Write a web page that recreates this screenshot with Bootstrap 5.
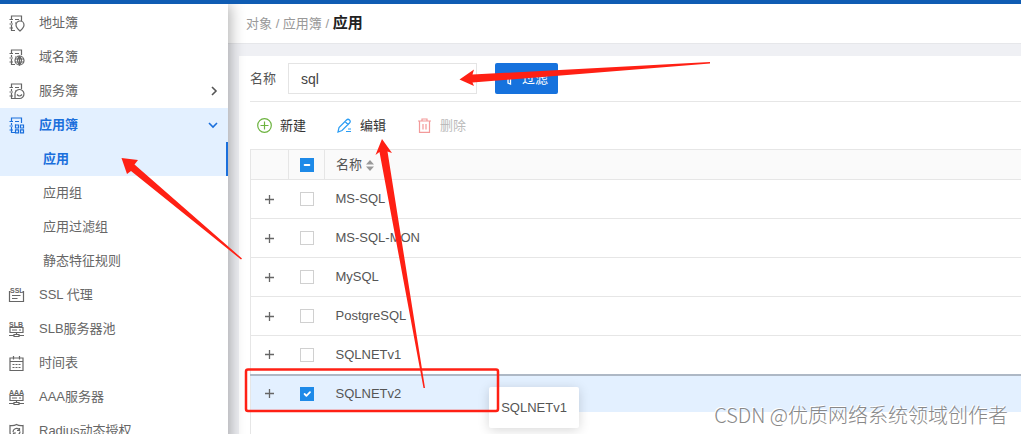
<!DOCTYPE html>
<html lang="zh-CN">
<head>
<meta charset="utf-8">
<meta name="viewport" content="width=device-width, initial-scale=1">
<title>应用</title>
<link href="https://cdn.jsdelivr.net/npm/bootstrap@5.3.0/dist/css/bootstrap.min.css" rel="stylesheet">
<style>
  body { font: 13px/20px "Liberation Sans", "Noto Sans CJK SC", sans-serif; color: #555; background: #fff; }
  .shell { height: 100vh; margin-right: 3px; }
  .topbar { height: 4px; background: #0f5cb3; }
  .side { width: 228px; padding-top: 2px; }
  .side-wrap { box-shadow: 2px 0 14px rgba(0,0,0,.32); z-index: 2; clip-path: inset(0 -24px 0 0); }
  .side a { height: 34px; padding: 0 10px 0 8px; color: #666; text-decoration: none; white-space: nowrap; }
  .side a svg { flex: none; }
  .side .label { margin-left: 14px; }
  .side .sub { padding-left: 43px; }
  .side .on { background: #e3f0ff; color: #1a6fdc; font-weight: 700; }
  .side .here { border-right: 2px solid #1a6fdc; }
  .ico { width: 17px; height: 17px; fill: none; stroke: currentColor; stroke-width: 1.2; overflow: visible; }
  .ico text { font: 700 7px "Liberation Sans", sans-serif; fill: currentColor; stroke: none; }
  .main { background: #eff0f4; }
  .crumbs { height: 40px; padding: 0 18px; color: #999; border-bottom: 1px solid #e6e7ea; }
  .crumbs a { color: #999; text-decoration: none; }
  .crumbs strong { font-size: 15px; color: #222; }
  .panel { margin: 12px 0 0 11px; padding-left: 11px; }
  .filter { height: 46px; border-bottom: 1px solid #e6e6e6; }
  .filter input { width: 189px; height: 31px; margin: 0 18px 0 12px; padding: 0 12px; font-size: 14px; color: #444; border: 1px solid #e4e4e4; border-radius: 0; }
  .filter button { width: 63px; height: 31px; padding: 0 9px; font-size: 13px; line-height: 20px; border: 0; border-radius: 2px; background: #1672dd; color: #fff; }
  .tools { height: 47px; padding-left: 7px; }
  .tools button { width: 80px; padding: 0; font-size: 13px; line-height: 20px; color: #333; border: 0; background: none; text-align: left; }
  .tools button:disabled { color: #bbb; opacity: 1; border: 0; }
  .grid { margin: 0; border-left: 1px solid #e6e6e6; color: #555; table-layout: fixed; }
  .grid > :not(caption) > * > * { padding: 0; height: 39px; border-bottom: 1px solid #e6e6e6; color: #555; font-weight: 400; background: transparent; vertical-align: middle; }
  .grid > thead > tr > th { height: 30px; background: #fafafa; border-top: 1px solid #e6e6e6; }
  .grid > thead > tr > th:not(:last-child) { border-right: 1px solid #e6e6e6; }
  .grid .c1 { width: 38px; } .grid .c2 { width: 36px; }
  .grid > * > tr > :last-child { padding-left: 11px; }
  .grid > tbody > tr:nth-child(5) > td { border-bottom: 2px solid #aeb8c5; }
  .grid > tbody > tr.picked > td { height: 37px; background: #e3f0ff; border-bottom: 0; }
  .grid input.form-check-input { display: block; width: 14px; height: 14px; margin: 0 auto; border: 1px solid #d0d0d0; border-radius: 0; }
  .grid input.form-check-input:checked, .grid input.form-check-input:indeterminate { background-color: #1e8ae8; border-color: #1e8ae8; }
  .plus { display: block; margin: 0 auto; padding: 0; border: 0; background: none; color: #666; }
  .plus svg { display: block; }
  .rest { border-left: 1px solid #e6e6e6; }
  .drag { left: 489px; top: 387px; width: 90px; height: 41px; z-index: 3; background: #fff; border-radius: 2px; box-shadow: 0 2px 12px rgba(0,0,0,.16); }
  .marks { left: 0; top: 0; width: 1024px; height: 434px; z-index: 4; pointer-events: none; }
  .water { right: 16px; bottom: 4px; z-index: 5; font: 300 20px/30px "Noto Sans CJK SC", sans-serif; color: #888; text-shadow: -1px -1px 0 #fff; white-space: nowrap; }
</style>
</head>
<body class="position-relative overflow-hidden">
<svg class="d-none">
  <symbol id="book" viewBox="0 0 17 17"><path d="M3.500 4V1H13.500V6M3.500 6V8M3.500 10V15.500H7M1.500 4.500H5M1.500 9H5M1.500 13H5M7 4.500H11M7 8H8"/></symbol>
  <symbol id="server" viewBox="0 0 17 17"><path d="M2 6.500H15V11.500H2ZM4 9H9M11 9H13M8.500 11.500V14M1 14.500H6M11 14.500H16M6 13.500H11V15.500H6Z"/></symbol>
</svg>
<div class="shell d-flex flex-column overflow-hidden">
  <div class="topbar flex-shrink-0"></div>
  <div class="d-flex flex-grow-1">
    <div class="side-wrap bg-white flex-shrink-0 position-relative">
    <nav class="side">
      <a href="#" class="d-flex align-items-center"><svg class="ico" viewBox="0 0 17 17"><use href="#book"/><path d="M12 16Q8 12.500 8 10A4 4 0 0 1 16 10Q16 12.500 12 16Z" fill="#fff"/></svg><span class="label">地址簿</span></a>
      <a href="#" class="d-flex align-items-center"><svg class="ico" viewBox="0 0 17 17"><use href="#book"/><circle cx="11.500" cy="11.500" r="4.500" fill="#fff"/><path d="M7 10H16M7 13H16M11.500 7V16M11.500 7Q7.500 11.500 11.500 16Q15.500 11.500 11.500 7"/></svg><span class="label">域名簿</span></a>
      <a href="#" class="d-flex align-items-center"><svg class="ico" viewBox="0 0 17 17"><use href="#book"/><path d="M7 15.500V11.500A4.500 4.500 0 1 1 11.500 15.500ZM9 11.500Q11.500 14.500 14 11.500" fill="#fff"/></svg><span class="label">服务簿</span><svg class="ms-auto" width="9" height="10" fill="none" stroke="#555" stroke-width="1.600"><path d="M3 1L7 5L3 9"/></svg></a>
      <a href="#" class="on d-flex align-items-center"><svg class="ico" viewBox="0 0 17 17"><use href="#book"/><path d="M7.500 8H10.500V11H7.500ZM12.500 8H15.500V11H12.500ZM7.500 12.800H10.500V15.800H7.500ZM12.500 12.800H15.500V15.800H12.500Z" fill="#e3f0ff"/></svg><span class="label">应用簿</span><svg class="ms-auto" width="10" height="9" fill="none" stroke="currentColor" stroke-width="1.600"><path d="M1 2L5 6L9 2"/></svg></a>
      <a href="#" class="sub on here d-flex align-items-center">应用</a>
      <a href="#" class="sub d-flex align-items-center">应用组</a>
      <a href="#" class="sub d-flex align-items-center">应用过滤组</a>
      <a href="#" class="sub d-flex align-items-center">静态特征规则</a>
      <a href="#" class="d-flex align-items-center"><svg class="ico" viewBox="0 0 17 17"><path d="M2.500 4.500H1.500V14.500H15.500V4.500H14.500M4 8.500H12.500M4 11.500H9.500"/><text x="2" y="6">SSL</text></svg><span class="label">SSL 代理</span></a>
      <a href="#" class="d-flex align-items-center"><svg class="ico" viewBox="0 0 17 17"><use href="#server"/><text x="1" y="5.500">SLB</text></svg><span class="label">SLB服务器池</span></a>
      <a href="#" class="d-flex align-items-center"><svg class="ico" viewBox="0 0 17 17"><path d="M2 3H15V15.500H2ZM2 6.500H15M5.500 1V4.500M11.500 1V4.500M4.500 9.500H6.500M7.500 9.500H9.500M10.500 9.500H12.500M4.500 12.500H6.500M7.500 12.500H9.500M10.500 12.500H12.500"/></svg><span class="label">时间表</span></a>
      <a href="#" class="d-flex align-items-center"><svg class="ico" viewBox="0 0 17 17"><use href="#server"/><text x="1" y="5.500">AAA</text></svg><span class="label">AAA服务器</span></a>
      <a href="#" class="d-flex align-items-center"><svg class="ico" viewBox="0 0 17 17"><path d="M2 2.500Q6 3 8.500 1.500Q11 3 15 2.500V10Q14 14 8.500 16Q3 14 2 10ZM5 9A3.500 3.500 0 0 1 11 6.500M12 8.500A3.500 3.500 0 0 1 6 11M11.500 5V7.500H9M5.500 12.500V10H8"/></svg><span class="label">Radius动态授权</span></a>
    </nav>
    </div>
    <main class="main flex-grow-1 d-flex flex-column">
      <div class="crumbs bg-white d-flex align-items-center flex-shrink-0"><div><a href="#">对象</a> / <a href="#">应用簿</a> / <strong>应用</strong></div></div>
      <section class="panel bg-white flex-grow-1 d-flex flex-column">
        <form class="filter d-flex align-items-center">
          <label for="q">名称</label>
          <input id="q" class="form-control flex-shrink-0" type="text" value="sql">
          <button type="button" class="btn d-flex align-items-center"><svg width="10" height="12" fill="none" stroke="currentColor" stroke-width="1.300"><path d="M1 1H9L6.500 5V11L4 10V5Z"/></svg><span class="ms-2">过滤</span></button>
        </form>
        <div class="tools d-flex align-items-center">
          <button type="button" class="btn d-flex align-items-center gap-2"><svg width="15" height="15" fill="none" stroke="#6cb33f" stroke-width="1.200"><circle cx="7.500" cy="7.500" r="6.800"/><path d="M3.500 7.500H11.500M7.500 3.500V11.500"/></svg>新建</button>
          <button type="button" class="btn d-flex align-items-center gap-2"><svg width="15" height="15" fill="none" stroke="#2a9df4" stroke-width="1.200"><path d="M1 14L2 9.500L9.500 2Q11 .5 12.500 2Q14 3.500 12.500 5L5 12.500ZM8 3.500L11.500 7M9 13.500H14M11 11H14"/></svg>编辑</button>
          <button type="button" class="btn d-flex align-items-center gap-2" disabled><svg width="15" height="15" fill="none" stroke="#f39a9a" stroke-width="1.200"><path d="M1 3H14M5 3V1H10V3M2.500 3V14.300H12.500V3M6 6V11.500M9 6V11.500"/></svg>删除</button>
        </div>
        <table class="table grid">
          <colgroup><col class="c1"><col class="c2"><col></colgroup>
          <thead><tr><th></th><th><input class="form-check-input" id="all" type="checkbox" aria-label="全选"></th><th>名称 <svg width="8" height="11" fill="#999"><path d="M0 4.500L4 0L8 4.500ZM0 6.500H8L4 11Z"/></svg></th></tr></thead>
          <tbody id="rows"></tbody>
        </table>
        <div class="rest flex-grow-1"></div>
      </section>
    </main>
  </div>
</div>
<div class="drag position-absolute d-flex align-items-center justify-content-center">SQLNETv1</div>
<svg class="marks position-absolute" viewBox="0 0 1024 434" fill="#ff2014">
  <path d="M121.500 158L138 160L134.500 164.500L242 258.500L241 259.500L131 171L127 174Z"/>
  <path d="M459.500 79.500L474 69.500L472.500 74.500L710 62L710 63.500L472.500 82.500L474 86Z"/>
  <path d="M382 139L392 153L387.500 151.500L425 388L423.500 388L379.500 152L375.500 155Z"/>
  <rect x="246" y="369.500" width="252" height="41.500" rx="2" fill="none" stroke="#ff2014" stroke-width="2.500"/>
</svg>
<div class="water position-absolute">CSDN @优质网络系统领域创作者</div>
<script src="https://cdn.jsdelivr.net/npm/bootstrap@5.3.0/dist/js/bootstrap.bundle.min.js"></script>
<script>
  const names = ['MS-SQL', 'MS-SQL-MON', 'MySQL', 'PostgreSQL', 'SQLNETv1', 'SQLNETv2'];
  document.getElementById('rows').innerHTML = names.map((n, i) => {
    const on = n === 'SQLNETv2';
    return `<tr class="${on ? 'picked' : ''}"><td><button type="button" class="plus" aria-label="展开"><svg width="9" height="9" stroke="currentColor" stroke-width="1.300"><path d="M0 4.500H9M4.500 0V9"/></svg></button></td>` +
      `<td><input class="form-check-input" type="checkbox" id="r${i}" ${on ? 'checked' : ''}></td><td><label for="r${i}">${n}</label></td></tr>`;
  }).join('');
  document.getElementById('all').indeterminate = true;
</script>
</body>
</html>
